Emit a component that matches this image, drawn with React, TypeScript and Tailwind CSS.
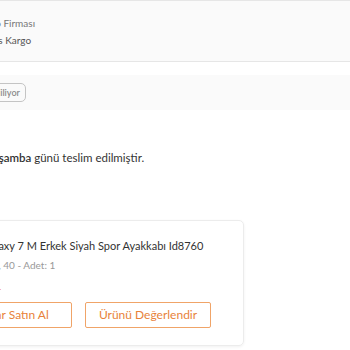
export default function App() {
  return (
    <div className="w-[350px] h-[350px] overflow-hidden bg-white font-['Lato',sans-serif]">
      {/* Kargo bilgisi */}
      <div className="h-[62px] border-t border-b border-[#e6e6e6] bg-[#fafafa] pt-[16px]">
        <p className="-ml-[25px] text-[10px] leading-[12px] text-[#777]">Kargo Firması</p>
        <p className="-ml-[17px] mt-[5px] text-[10px] leading-[13px] text-[#555]">Aras Kargo</p>
      </div>

      {/* Durum */}
      <div className="mt-[13px] h-[35px] bg-[#fafafa] flex items-center">
        <span className="-ml-[43px] h-[19px] px-[5px] flex items-center rounded-[5px] border border-[#c4c4c4] text-[9px] font-semibold text-[#8a8a8a]">
          Teslim Ediliyor
        </span>
      </div>

      <p className="mt-[40px] -ml-[19px] text-[11.5px] leading-[16px] text-[#333]">
        <span className="font-semibold">Çarşamba</span> günü teslim edilmiştir.
      </p>

      {/* Ürün kartı */}
      <div className="mt-[54px] -ml-[30px] w-[274px] h-[126px] rounded-[5px] border border-[#ececec] shadow-[0_1px_3px_rgba(0,0,0,0.06)] pl-[16px] pt-[18px]">
        <p className="-ml-[40px] text-[11px] leading-[14px] text-[#333] whitespace-nowrap">
          Adidas Galaxy 7 M Erkek Siyah Spor Ayakkabı Id8760
        </p>
        <p className="-ml-[12px] mt-[6px] text-[10px] leading-[12px] text-[#999]">Siyah, 40 - Adet: 1</p>
        <p className="-ml-[17px] mt-[9px] text-[10px] leading-[12px] font-semibold text-[#f27a1a]">999 TL</p>
        <div className="mt-[10px] flex gap-[13px]">
          <button className="-ml-[37px] w-[122px] h-[26px] border border-[#f0a468] rounded-[2px] text-[12px] text-[#e8823a]">
            Tekrar Satın Al
          </button>
          <button className="w-[126px] h-[26px] border border-[#f0a468] rounded-[2px] text-[12px] text-[#e8823a]">
            Ürünü Değerlendir
          </button>
        </div>
      </div>
    </div>
  );
}
